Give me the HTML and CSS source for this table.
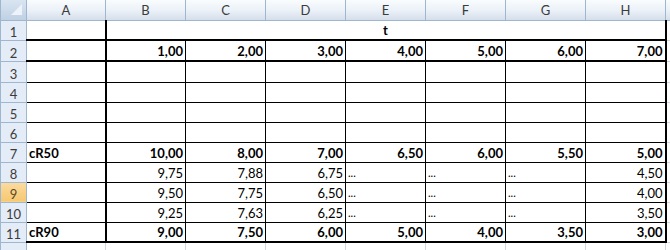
FILE: index.html
```html
<!DOCTYPE html>
<html lang="de">
<head>
    <meta charset="UTF-8">
    <meta name="viewport" content="width=device-width, initial-scale=1.0">
    <title>Tabelle1</title>
    <link rel="stylesheet" href="styles.css">
</head>
<body>
    <div class="window">
    <table class="sheet">
        <colgroup>
            <col class="col-rh">
            <col class="col-a">
            <col class="col-n" span="7">
            <col class="col-i">
        </colgroup>
        <thead>
            <tr class="head">
                <th class="corner">
                    <svg width="26" height="19" viewBox="0 0 26 19"><polygon points="21,4 21,15 10,15" fill="#eef3f9"/></svg>
                </th>
                <th>A</th><th>B</th><th>C</th><th>D</th><th>E</th><th>F</th><th>G</th><th>H</th><th></th>
            </tr>
        </thead>
        <tbody>
            <tr>
                <th class="rh">1</th>
                <td class="tk-b"></td>
                <td colspan="7" class="title tk-l tk-r tk-b">t</td>
                <td></td>
            </tr>
            <tr class="tall">
                <th class="rh">2</th>
                <td class="box tk-t tk-b"></td>
                <td class="box tk-t tk-b tk-l n b">1,00</td>
                <td class="box tk-t tk-b n b">2,00</td>
                <td class="box tk-t tk-b n b">3,00</td>
                <td class="box tk-t tk-b n b">4,00</td>
                <td class="box tk-t tk-b n b">5,00</td>
                <td class="box tk-t tk-b n b">6,00</td>
                <td class="box tk-t tk-b tk-r n b">7,00</td>
                <td></td>
            </tr>
            <tr class="tall">
                <th class="rh">3</th>
                <td class="box"></td>
                <td class="box tk-l"></td><td class="box"></td><td class="box"></td><td class="box"></td><td class="box"></td><td class="box"></td>
                <td class="box tk-r"></td>
                <td></td>
            </tr>
            <tr>
                <th class="rh">4</th>
                <td class="box"></td>
                <td class="box tk-l"></td><td class="box"></td><td class="box"></td><td class="box"></td><td class="box"></td><td class="box"></td>
                <td class="box tk-r"></td>
                <td></td>
            </tr>
            <tr>
                <th class="rh">5</th>
                <td class="box"></td>
                <td class="box tk-l"></td><td class="box"></td><td class="box"></td><td class="box"></td><td class="box"></td><td class="box"></td>
                <td class="box tk-r"></td>
                <td></td>
            </tr>
            <tr>
                <th class="rh">6</th>
                <td class="box"></td>
                <td class="box tk-l"></td><td class="box"></td><td class="box"></td><td class="box"></td><td class="box"></td><td class="box"></td>
                <td class="box tk-r"></td>
                <td></td>
            </tr>
            <tr>
                <th class="rh">7</th>
                <td class="box b">cR50</td>
                <td class="box tk-l n b">10,00</td>
                <td class="box n b">8,00</td>
                <td class="box n b">7,00</td>
                <td class="box n b">6,50</td>
                <td class="box n b">6,00</td>
                <td class="box n b">5,50</td>
                <td class="box tk-r n b">5,00</td>
                <td></td>
            </tr>
            <tr>
                <th class="rh">8</th>
                <td class="box"></td>
                <td class="box tk-l n">9,75</td>
                <td class="box n">7,88</td>
                <td class="box n">6,75</td>
                <td class="box dots">...</td>
                <td class="box dots">...</td>
                <td class="box dots">...</td>
                <td class="box tk-r n">4,50</td>
                <td></td>
            </tr>
            <tr>
                <th class="rh active">9</th>
                <td class="box"></td>
                <td class="box tk-l n">9,50</td>
                <td class="box n">7,75</td>
                <td class="box n">6,50</td>
                <td class="box dots">...</td>
                <td class="box dots">...</td>
                <td class="box dots">...</td>
                <td class="box tk-r n">4,00</td>
                <td></td>
            </tr>
            <tr>
                <th class="rh">10</th>
                <td class="box"></td>
                <td class="box tk-l n">9,25</td>
                <td class="box n">7,63</td>
                <td class="box n">6,25</td>
                <td class="box dots">...</td>
                <td class="box dots">...</td>
                <td class="box dots">...</td>
                <td class="box tk-r n">3,50</td>
                <td></td>
            </tr>
            <tr>
                <th class="rh">11</th>
                <td class="box tk-b b">cR90</td>
                <td class="box tk-l tk-b n b">9,00</td>
                <td class="box tk-b n b">7,50</td>
                <td class="box tk-b n b">6,00</td>
                <td class="box tk-b n b">5,00</td>
                <td class="box tk-b n b">4,00</td>
                <td class="box tk-b n b">3,50</td>
                <td class="box tk-r tk-b n b">3,00</td>
                <td></td>
            </tr>
            <!-- next row peeks in under the frame -->
            <tr>
                <th class="rh"></th>
                <td></td><td></td><td></td><td></td><td></td><td></td><td></td><td></td><td></td>
            </tr>
        </tbody>
    </table>
    </div>
</body>
</html>
```

FILE: styles.css
```css
body {
    margin: 0;
    background: #fff;
    font-family: Lato, "Liberation Sans", sans-serif;
    overflow: hidden;
}

.window {
    width: 670px;
    height: 250px;
    overflow: hidden;
}

.sheet {
    border-collapse: collapse;
    table-layout: fixed;
    width: 705px;
    font-size: 13px;
    color: #000;
}

.col-rh { width: 26px; }
.col-a { width: 79px; }
.col-n { width: 80px; }
.col-i { width: 40px; }

.sheet td,
.sheet th {
    box-sizing: border-box;
    height: 20px;
    padding: 0 2px 1px;
    border: 1px solid #d0d7e5;
    line-height: 16px;
    white-space: nowrap;
    overflow: hidden;
    vertical-align: bottom;
}

.sheet tr.tall td,
.sheet tr.tall th {
    height: 21px;
}

/* column letters */
.head th {
    height: 20px;
    padding: 0;
    background: linear-gradient(#f9fcfd, #eaf0f7 55%, #d5deea);
    border: 1px solid #9eb6ce;
    border-top: none;
    color: #3b3b3b;
    font-weight: normal;
    text-align: center;
    vertical-align: middle;
}

.head th.corner {
    background: linear-gradient(#d9e4f1, #bfd0e4);
    line-height: 0;
}

.corner svg {
    display: block;
}

/* row numbers */
.sheet th.rh {
    padding: 0;
    background: #e4ecf7;
    border: 1px solid #9eb6ce;
    color: #3b3b3b;
    font-weight: normal;
    text-align: center;
}

.sheet th.rh.active {
    background: linear-gradient(#fbdb9f, #f6c870);
    color: #5a4a2a;
}

.sheet td.box { border: 1px solid #000; }
.sheet td.tk-l { border-left: 2px solid #000; }
.sheet td.tk-r { border-right: 2px solid #000; }
.sheet td.tk-t { border-top: 2px solid #000; }
.sheet td.tk-b { border-bottom: 2px solid #000; }

.n { text-align: right; }
.b { font-weight: 700; }

.title {
    text-align: center;
    font-weight: 700;
}

.dots {
    text-align: left;
    font-size: 11px;
}
```
